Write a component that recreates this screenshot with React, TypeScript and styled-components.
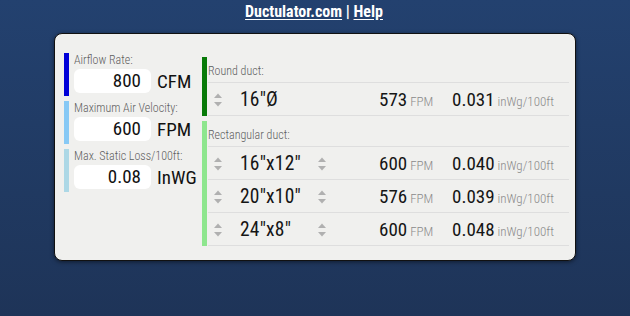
import React from "react";
import styled, { createGlobalStyle } from "styled-components";

const GlobalStyle = createGlobalStyle`
  html, body {
    margin: 0;
    padding: 0;
  }
  body {
    font-family: "Roboto Condensed", Roboto, "Liberation Sans", sans-serif;
    background: linear-gradient(#23416f, #1e3458);
    min-height: 316px;
  }
`;

type Input = { label: string; value: string; unit: string; color: string };
type Result = { dims: string; fpm: string; loss: string };

const inputs: Input[] = [
  { label: "Airflow Rate:", value: "800", unit: "CFM", color: "#0000d8" },
  { label: "Maximum Air Velocity:", value: "600", unit: "FPM", color: "#87c9f5" },
  { label: "Max. Static Loss/100ft:", value: "0.08", unit: "InWG", color: "#add8e6" },
];

const rectRows: Result[] = [
  { dims: '16"x12"', fpm: "600", loss: "0.040" },
  { dims: '20"x10"', fpm: "576", loss: "0.039" },
  { dims: '24"x8"', fpm: "600", loss: "0.048" },
];

const Spinner = () => (
  <SpinBox>
    <svg width="10" height="20" viewBox="0 0 10 20">
      <path d="M1 8 L5 3.5 L9 8 Z" fill="#b0b0b0" />
      <path d="M1 12 L5 16.5 L9 12 Z" fill="#b0b0b0" />
    </svg>
  </SpinBox>
);

export default function App() {
  return (
    <>
      <GlobalStyle />
      <Page>
        <Header>
          <Link>Ductulator.com</Link> | <Link>Help</Link>
        </Header>
        <Card>
          <LeftCol>
            {inputs.map((i) => (
              <Field key={i.label} $color={i.color}>
                <FieldLabel>{i.label}</FieldLabel>
                <FieldRow>
                  <ValueBox>{i.value}</ValueBox>
                  <Unit>{i.unit}</Unit>
                </FieldRow>
              </Field>
            ))}
          </LeftCol>
          <RightCol>
            <Group $color="#087a08">
              <GroupLabel>Round duct:</GroupLabel>
              <Row>
                <Spinner />
                <Dims>16"Ø</Dims>
                <span />
                <Metric>
                  <Big>573</Big>
                  <Small>FPM</Small>
                </Metric>
                <Metric>
                  <Big>0.031</Big>
                  <Small>inWg/100ft</Small>
                </Metric>
              </Row>
            </Group>
            <Group $color="#8ee68e">
              <GroupLabel>Rectangular duct:</GroupLabel>
              {rectRows.map((r) => (
                <Row key={r.dims}>
                  <Spinner />
                  <Dims>{r.dims}</Dims>
                  <Spinner />
                  <Metric>
                    <Big>{r.fpm}</Big>
                    <Small>FPM</Small>
                  </Metric>
                  <Metric>
                    <Big>{r.loss}</Big>
                    <Small>inWg/100ft</Small>
                  </Metric>
                </Row>
              ))}
            </Group>
          </RightCol>
        </Card>
      </Page>
    </>
  );
}

const Page = styled.div`
  display: flex;
  flex-direction: column;
  align-items: center;
  padding-top: 3px;
`;

const Header = styled.div`
  color: #fff;
  font-size: 16px;
  font-weight: 700;
  line-height: 18px;
  margin-left: -2px;
`;

const Link = styled.span`
  text-decoration: underline;
  text-underline-offset: 2px;
`;

const Card = styled.div`
  margin-top: 12px;
  width: 505px;
  height: 207px;
  padding: 19px 6px 0 9px;
  background: #f0f0ee;
  border: 1px solid #111;
  border-radius: 8px;
  box-shadow: 0 1px 4px rgba(0, 0, 0, 0.5);
  display: flex;
  gap: 2px;
`;

const LeftCol = styled.div`
  width: 136px;
  display: flex;
  flex-direction: column;
  gap: 5px;
`;

const Field = styled.div<{ $color: string }>`
  border-left: 5px solid ${(p) => p.$color};
  padding-left: 5px;
  height: 43px;
`;

const FieldLabel = styled.div`
  font-size: 12px;
  font-weight: 300;
  color: #5e5e5e;
  line-height: 14px;
  white-space: nowrap;
`;

const FieldRow = styled.div`
  display: flex;
  align-items: center;
  gap: 6px;
  margin-top: 2px;
`;

const ValueBox = styled.div`
  width: 67px;
  height: 24px;
  background: #fff;
  border-radius: 6px;
  padding-right: 10px;
  text-align: right;
  font-size: 19px;
  line-height: 24px;
  color: #111;
`;

const Unit = styled.div`
  font-size: 19px;
  color: #111;
`;

const RightCol = styled.div`
  flex: 1;
  display: flex;
  flex-direction: column;
  gap: 5px;
  margin-top: 4px;
`;

const Group = styled.div<{ $color: string }>`
  border-left: 5px solid ${(p) => p.$color};
  padding-left: 1px;
`;

const GroupLabel = styled.div`
  font-size: 12px;
  font-weight: 300;
  color: #5e5e5e;
  height: 25px;
  line-height: 28px;
  border-bottom: 1px solid #dedede;
`;

const Row = styled.div`
  display: grid;
  grid-template-columns: 20px 86px 16px 122px 1fr;
  align-items: center;
  height: 32px;
  border-bottom: 1px solid #dedede;
`;

const SpinBox = styled.div`
  display: flex;
  justify-content: center;
  padding-top: 2px;
`;

const Dims = styled.div`
  padding-left: 12px;
  font-size: 19.5px;
  color: #151515;
  letter-spacing: 0.2px;
`;

const Metric = styled.div`
  display: flex;
  align-items: baseline;
  gap: 3px;
  padding-left: 49px;
  &:last-child {
    padding-left: 0;
  }
`;

const Big = styled.span`
  font-size: 19px;
  color: #151515;
`;

const Small = styled.span`
  font-size: 13px;
  font-weight: 300;
  color: #8a8a8a;
`;
